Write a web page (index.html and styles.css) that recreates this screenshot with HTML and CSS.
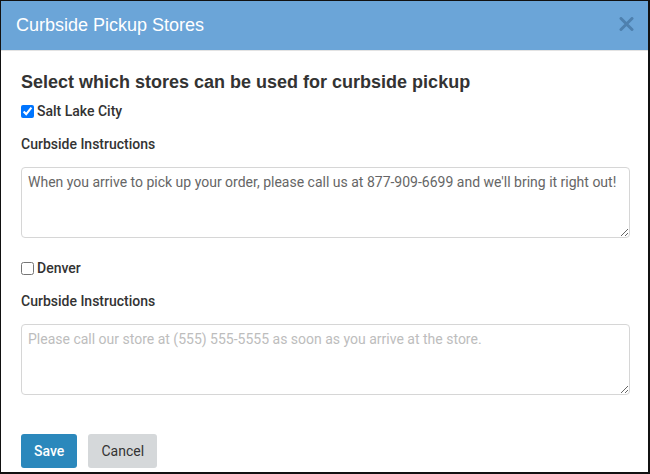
FILE: index.html
```html
<!DOCTYPE html>
<html>
<head>
<meta charset="utf-8">
<title>Curbside Pickup Stores</title>
<link rel="stylesheet" href="styles.css">
</head>
<body>
<div class="dialog">
  <div class="dialog-header">
    <h1 class="dialog-title">Curbside Pickup Stores</h1>
    <svg class="close" width="15" height="14" viewBox="0 0 15 14" aria-label="Close">
      <path d="M2 1.5 L13 12.5 M13 1.5 L2 12.5" stroke="#4e80ae" stroke-width="3" stroke-linecap="round"/>
    </svg>
  </div>
  <div class="dialog-body">
    <h2 class="section-title">Select which stores can be used for curbside pickup</h2>
    <label class="store"><input type="checkbox" checked> Salt Lake City</label>
    <div class="field-label">Curbside Instructions</div>
    <textarea class="instructions">When you arrive to pick up your order, please call us at 877-909-6699 and we'll bring it right out!</textarea>
    <label class="store"><input type="checkbox"> Denver</label>
    <div class="field-label">Curbside Instructions</div>
    <textarea class="instructions" placeholder="Please call our store at (555) 555-5555 as soon as you arrive at the store."></textarea>
    <div class="actions">
      <button class="btn btn-primary">Save</button>
      <button class="btn btn-default">Cancel</button>
    </div>
  </div>
</div>
</body>
</html>
```
FILE: styles.css
```css
html, body {
  margin: 0;
  padding: 0;
  background: #fff;
}
.dialog {
  box-sizing: border-box;
  width: 650px;
  height: 474px;
  border: 1px solid #111;
  border-right-width: 2px;
  border-bottom-width: 2px;
  display: flex;
  flex-direction: column;
  overflow: hidden;
  font-family: Roboto, "Liberation Sans", sans-serif;
  color: #333;
}
.dialog-header {
  height: 49px;
  background: #6ba5d8;
  border-bottom: 1px solid #e3e3e3;
  display: flex;
  align-items: center;
  justify-content: space-between;
  padding: 0 14px 0 15px;
  flex: none;
}
.dialog-title {
  margin: 0;
  font-family: "Liberation Sans", Arial, sans-serif;
  font-weight: normal;
  font-size: 18px;
  color: #fff;
}
.close {
  display: block;
  margin-top: -4px;
}
.dialog-body {
  padding: 20px 20px 0 20px;
  display: flex;
  flex-direction: column;
}
.section-title {
  margin: 0 0 10px 0;
  font-family: "Liberation Sans", Arial, sans-serif;
  font-weight: bold;
  font-size: 18px;
  line-height: 22px;
  color: #333;
}
.store {
  display: flex;
  align-items: center;
  gap: 3px;
  font-size: 14px;
  font-weight: 500;
  line-height: 16px;
  margin: 0;
}
.store input {
  margin: 0;
  width: 13px;
  height: 13px;
}
.field-label {
  margin-top: 17px;
  font-size: 14px;
  font-weight: 500;
  line-height: 16px;
}
.instructions {
  margin-top: 15px;
  box-sizing: border-box;
  width: 609px;
  height: 71px;
  border: 1px solid #d6d6d6;
  border-radius: 4px;
  padding: 4px 6px;
  font-family: Roboto, "Liberation Sans", sans-serif;
  font-size: 14px;
  line-height: 20px;
  color: #666;
  resize: vertical;
}
.instructions::placeholder {
  color: #bdbdbd;
}
.instructions + .store {
  margin-top: 22px;
}
.actions {
  margin-top: 39px;
  display: flex;
  gap: 11px;
}
.btn {
  height: 34px;
  border: none;
  border-radius: 3px;
  padding: 0 13px;
  font-family: Roboto, "Liberation Sans", sans-serif;
  font-size: 14px;
}
.btn-primary {
  background: #2b88bc;
  color: #fff;
  font-weight: 500;
}
.btn-default {
  background: #d5d8da;
  color: #333;
  width: 69px;
  padding: 0;
}
```
